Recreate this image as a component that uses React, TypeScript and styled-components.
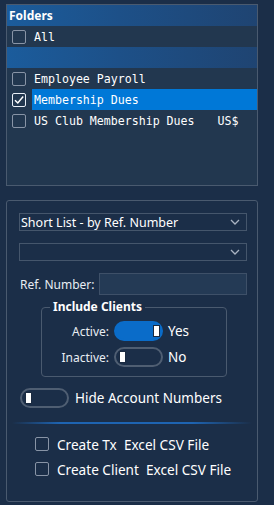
import React from 'react';
import styled, { createGlobalStyle } from 'styled-components';

const Global = createGlobalStyle`
  html, body { margin: 0; padding: 0; background: #1b2e48; }
  body { font-family: "Noto Sans", "Open Sans", sans-serif; color: #ffffff; }
  * { box-sizing: border-box; }
`;

const Page = styled.div`
  width: 274px;
  height: 505px;
  padding: 4px 16px 0 6px;
  display: flex;
  flex-direction: column;
  gap: 14px;
`;

const ListPanel = styled.div`
  height: 182px;
  border: 1px solid #4a5a6f;
  background: #22374f;
  display: flex;
  flex-direction: column;
`;

const HeaderRow = styled.div`
  height: 21px;
  display: flex;
  align-items: center;
  padding-left: 2px;
  font-size: 12px;
  font-weight: 700;
  background: linear-gradient(90deg, #1b5c9c 0%, #1d5088 45%, #1f4472 100%);
`;

const Row = styled.div<{ $band?: boolean }>`
  height: 21px;
  display: flex;
  align-items: center;
  padding-left: 5px;
  background: ${(p) => (p.$band ? 'linear-gradient(90deg, #1b5c9c 0%, #1d5088 45%, #1f4472 100%)' : 'transparent')};
`;

const Box = styled.span<{ $checked?: boolean }>`
  width: 14px;
  height: 14px;
  flex: none;
  border: 1px solid ${(p) => (p.$checked ? '#e8eef6' : '#8894a6')};
  border-radius: 2px;
  display: flex;
  align-items: center;
  justify-content: center;
`;

const ItemText = styled.span<{ $selected?: boolean }>`
  flex: 1;
  height: 100%;
  margin-left: 6px;
  padding-left: 2px;
  display: flex;
  align-items: center;
  font-family: "DejaVu Sans Mono", "Liberation Mono", monospace;
  font-size: 11.6px;
  white-space: pre;
  background: ${(p) => (p.$selected ? '#0078d7' : 'transparent')};
`;

const Currency = styled.span`
  margin-left: 23px;
`;

const OptionsPanel = styled.div`
  height: 302px;
  border: 1px solid #4a5a6f;
  border-radius: 3px;
  padding: 12px 10px 0 12px;
  display: flex;
  flex-direction: column;
`;

const Select = styled.div`
  height: 18px;
  border: 1px solid #45566c;
  display: flex;
  align-items: center;
  justify-content: space-between;
  padding: 0 6px 0 1px;
  font-size: 12.5px;
  margin-bottom: 12px;
`;

const RefRow = styled.div`
  display: flex;
  align-items: center;
  gap: 4px;
  margin-bottom: 5px;
`;

const RefLabel = styled.label`
  width: 76px;
  padding-left: 1px;
  font-size: 12px;
  color: #e8edf3;
`;

const RefInput = styled.div`
  flex: 1;
  height: 22px;
  background: #243a55;
  border: 1px solid #3e5068;
`;

const Group = styled.fieldset`
  margin: 0 20px 0 22px;
  padding: 7px 0 9px 0;
  border: 1px solid #4a5a6f;
  border-radius: 4px;
  display: grid;
  grid-template-columns: 67px 49px auto;
  column-gap: 5px;
  row-gap: 6px;
  align-items: center;
`;

const Legend = styled.legend`
  margin-left: 8px;
  padding: 0 3px;
  font-size: 12px;
  font-weight: 700;
  line-height: 14px;
`;

const ToggleLabel = styled.span`
  text-align: right;
  font-size: 12px;
  color: #e8edf3;
`;

const Toggle = styled.span<{ $on?: boolean }>`
  width: 49px;
  height: 20px;
  border-radius: 10px;
  border: 2px solid ${(p) => (p.$on ? '#0a6cc9' : '#4f5e72')};
  background: ${(p) => (p.$on ? '#0a6cc9' : 'transparent')};
  display: flex;
  align-items: center;
  justify-content: ${(p) => (p.$on ? 'flex-end' : 'flex-start')};
  padding: 0 2px 0 4px;
`;

const Knob = styled.span`
  width: 5px;
  height: 10px;
  background: #ffffff;
  box-shadow: 0 0 0 1px #1a2a40;
`;

const StateText = styled.span`
  font-size: 13.5px;
`;

const HideRow = styled.div`
  display: flex;
  align-items: center;
  gap: 6px;
  margin: 11px 0 0 1px;
`;

const Divider = styled.div`
  height: 2px;
  margin: 14px -5px 0 -7px;
  background: linear-gradient(90deg, rgba(30, 100, 180, 0) 0%, #1e64b2 20%, #1e64b2 75%, rgba(30, 100, 180, 0) 100%);
`;

const CheckList = styled.div`
  display: flex;
  flex-direction: column;
  gap: 11px;
  margin: 13px 0 0 16px;
`;

const CheckRow = styled.label`
  height: 14px;
  display: flex;
  align-items: center;
  gap: 8px;
  font-size: 13.6px;
  white-space: pre;
`;

const Chevron = () => (
  <svg width="10" height="6" viewBox="0 0 10 6">
    <path d="M1 1 L5 5 L9 1" fill="none" stroke="#a9b3c2" strokeWidth="1.3" />
  </svg>
);

const Tick = () => (
  <svg width="12" height="12" viewBox="0 0 12 12">
    <path d="M2 6.2 L4.8 9 L10.2 2.6" fill="none" stroke="#ffffff" strokeWidth="1.5" />
  </svg>
);

const folders = [
  { name: 'Employee Payroll', checked: false },
  { name: 'Membership Dues', checked: true },
  { name: 'US Club Membership Dues', checked: false, currency: 'US$' },
];

export default function App() {
  return (
    <>
      <Global />
      <Page>
        <ListPanel>
          <HeaderRow>Folders</HeaderRow>
          <Row>
            <Box />
            <ItemText>All</ItemText>
          </Row>
          <Row $band />
          {folders.map((f) => (
            <Row key={f.name}>
              <Box $checked={f.checked}>{f.checked && <Tick />}</Box>
              <ItemText $selected={f.checked}>
                {f.name}
                {f.currency && <Currency>{f.currency}</Currency>}
              </ItemText>
            </Row>
          ))}
        </ListPanel>
        <OptionsPanel>
          <Select>
            <span>Short List - by Ref. Number</span>
            <Chevron />
          </Select>
          <Select>
            <span />
            <Chevron />
          </Select>
          <RefRow>
            <RefLabel>Ref. Number:</RefLabel>
            <RefInput />
          </RefRow>
          <Group>
            <Legend>Include Clients</Legend>
            <ToggleLabel>Active:</ToggleLabel>
            <Toggle $on>
              <Knob />
            </Toggle>
            <StateText>Yes</StateText>
            <ToggleLabel>Inactive:</ToggleLabel>
            <Toggle>
              <Knob />
            </Toggle>
            <StateText>No</StateText>
          </Group>
          <HideRow>
            <Toggle>
              <Knob />
            </Toggle>
            <StateText>Hide Account Numbers</StateText>
          </HideRow>
          <Divider />
          <CheckList>
            <CheckRow>
              <Box />
              Create Tx  Excel CSV File
            </CheckRow>
            <CheckRow>
              <Box />
              Create Client  Excel CSV File
            </CheckRow>
          </CheckList>
        </OptionsPanel>
      </Page>
    </>
  );
}
